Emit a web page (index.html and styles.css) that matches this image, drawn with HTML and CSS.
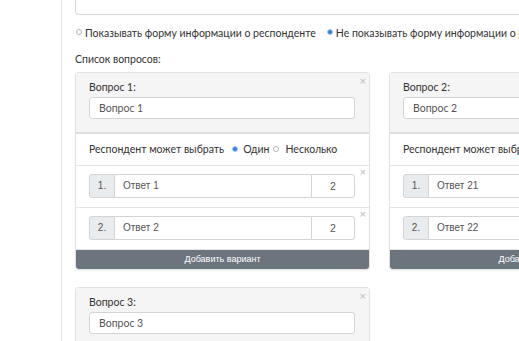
FILE: index.html
```html
<!DOCTYPE html>
<html lang="ru">
<head>
  <meta charset="UTF-8" />
  <title>Опрос</title>
  <link rel="stylesheet" href="styles.css">
</head>
<body>
  <div class="panel">
    <div class="top-field"></div>

    <div class="radios">
      <label class="radio"><span class="dot"></span>Показывать форму информации о респонденте</label>
      <label class="radio"><span class="dot on"></span>Не показывать форму информации о респонденте</label>
    </div>

    <div class="list-title">Список вопросов:</div>

    <div class="questions">
      <div class="card">
        <span class="close">×</span>
        <div class="card-head">
          <div class="label">Вопрос 1:</div>
          <div class="field">Вопрос 1</div>
        </div>
        <div class="choice">Респондент может выбрать<span class="dot on one"></span>Один<span class="dot many"></span>Несколько</div>
        <div class="answer">
          <span class="close">×</span>
          <div class="group"><span class="addon">1.</span><span class="text">Ответ 1</span><span class="num">2</span></div>
        </div>
        <div class="answer">
          <span class="close">×</span>
          <div class="group"><span class="addon">2.</span><span class="text">Ответ 2</span><span class="num">2</span></div>
        </div>
        <button class="add">Добавить вариант</button>
      </div>

      <div class="card">
        <span class="close">×</span>
        <div class="card-head">
          <div class="label">Вопрос 2:</div>
          <div class="field">Вопрос 2</div>
        </div>
        <div class="choice">Респондент может выбрать<span class="dot on one"></span>Один<span class="dot many"></span>Несколько</div>
        <div class="answer">
          <span class="close">×</span>
          <div class="group"><span class="addon">1.</span><span class="text">Ответ 21</span><span class="num">2</span></div>
        </div>
        <div class="answer">
          <span class="close">×</span>
          <div class="group"><span class="addon">2.</span><span class="text">Ответ 22</span><span class="num">2</span></div>
        </div>
        <button class="add">Добавить вариант</button>
      </div>

      <div class="card">
        <span class="close">×</span>
        <div class="card-head">
          <div class="label">Вопрос 3:</div>
          <div class="field">Вопрос 3</div>
        </div>
        <div class="choice">Респондент может выбрать<span class="dot on one"></span>Один<span class="dot many"></span>Несколько</div>
        <div class="answer">
          <span class="close">×</span>
          <div class="group"><span class="addon">1.</span><span class="text">Ответ 31</span><span class="num">2</span></div>
        </div>
        <button class="add">Добавить вариант</button>
      </div>
    </div>
  </div>
</body>
</html>
```

FILE: styles.css
```css
body {
  margin: 0;
  background: #fff;
  font-family: 'Lato', sans-serif;
  font-size: 10.5px;
  color: #333;
  overflow: hidden;
}

.panel {
  margin-left: 61px;
  width: 760px;
  min-height: 400px;
  border-left: 1px solid #e2e2e2;
  padding-left: 13px;
}

.top-field {
  height: 33px;
  margin-top: -20px;
  border: 1px solid #d6d6d6;
  border-radius: 4px;
}

.radios {
  display: flex;
  gap: 10px;
  margin-top: 11px;
  line-height: 14px;
  white-space: nowrap;
}

.radio {
  display: flex;
  align-items: center;
  margin-left: 1px;
}

.dot {
  display: inline-block;
  width: 4px;
  height: 4px;
  border: 1px solid #b5b5b5;
  border-radius: 50%;
  margin-right: 3px;
  vertical-align: middle;
  position: relative;
  top: -1px;
}

.dot.on {
  background: #2f7fe0;
  border-color: #a9c9f0;
}

.list-title {
  margin-top: 12px;
  line-height: 14px;
}

.questions {
  display: flex;
  flex-wrap: wrap;
  column-gap: 19px;
  row-gap: 17px;
  margin-top: 6px;
}

.card {
  position: relative;
  width: 293px;
  border: 1px solid #e2e2e2;
  border-radius: 3px;
  box-shadow: 0 1px 2px rgba(0, 0, 0, 0.05);
}

.close {
  position: absolute;
  top: 2px;
  right: 3px;
  color: #bbb;
  font-family: 'Liberation Sans', sans-serif;
  font-size: 11px;
  line-height: 12px;
}

.card-head {
  background: #f5f5f5;
  padding: 7px 14px 13px 13px;
  border-bottom: 2px solid #dedede;
}

.label {
  line-height: 14px;
  margin-bottom: 3px;
}

.field {
  height: 20px;
  border: 1px solid #d4d4d4;
  border-radius: 3px;
  background: #fff;
  padding-left: 9px;
  line-height: 20px;
  color: #555;
}

.choice {
  height: 31px;
  line-height: 31px;
  padding-left: 13px;
  border-bottom: 1px solid #e6e6e6;
  white-space: nowrap;
  overflow: hidden;
}

.choice .one {
  margin: 0 5px 0 8px;
}

.choice .many {
  margin: 0 7px 0 3px;
}

.answer {
  position: relative;
  padding: 8px 14px 9px 13px;
  border-bottom: 1px solid #e6e6e6;
}

.answer .close {
  top: 0;
  right: 3px;
}

.group {
  display: flex;
  height: 24px;
  font-family: 'Liberation Sans', sans-serif;
  font-size: 10px;
  color: #555;
  line-height: 22px;
}

.group span {
  border: 1px solid #d4d4d4;
}

.addon {
  width: 24px;
  text-align: center;
  background: #e9ecef;
  border-radius: 3px 0 0 3px;
}

.text {
  flex: 1;
  padding-left: 8px;
  border-left: none !important;
  border-right: none !important;
}

.num {
  width: 42px;
  text-align: center;
  font-size: 10.5px;
  border-radius: 0 3px 3px 0;
}

.add {
  display: block;
  width: 100%;
  height: 20px;
  border: none;
  border-radius: 0 0 3px 3px;
  background: #6c757d;
  color: #fff;
  font-family: 'Liberation Sans', sans-serif;
  font-size: 9px;
  margin-top: -1px;
}
```
